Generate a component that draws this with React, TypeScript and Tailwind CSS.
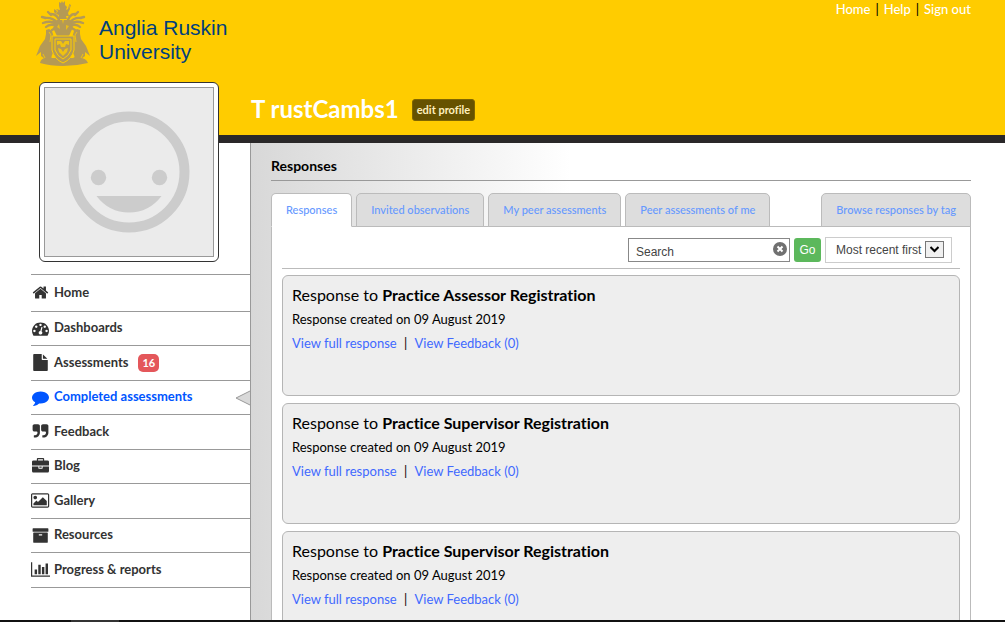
import { useState } from 'react';

interface NavItem {
  label: string;
  width: number;
  path: string;
  badge?: number;
  active?: boolean;
}

const navItems: NavItem[] = [
  {
    label: 'Home',
    width: 1792,
    path: 'M1472 992v480q0 26-19 45t-45 19h-384v-384h-256v384h-384q-26 0-45-19t-19-45v-480q0-1 .5-3t.5-3l575-474 575 474q1 2 1 6zm223-69l-62 74q-8 9-21 11h-3q-13 0-21-7l-692-577-692 577q-12 8-24 7-13-2-21-11l-62-74q-8-10-7-23.5t11-21.5l719-599q32-26 76-26t76 26l244 204v-195q0-14 9-23t23-9h192q14 0 23 9t9 23v408l219 182q10 8 11 21.5t-7 23.5z',
  },
  {
    label: 'Dashboards',
    width: 1792,
    path: 'M384 1152q0-53-37.5-90.5t-90.5-37.5-90.5 37.5-37.5 90.5 37.5 90.5 90.5 37.5 90.5-37.5 37.5-90.5zm192-448q0-53-37.5-90.5t-90.5-37.5-90.5 37.5-37.5 90.5 37.5 90.5 90.5 37.5 90.5-37.5 37.5-90.5zm428 481l101-382q6-26-7.5-48.5t-38.5-29.5-48 6.5-30 39.5l-101 382q-60 5-107 43.5t-63 98.5q-20 77 20 146t117 89 146-20 89-117q16-60-6-117t-72-91zm660-33q0-53-37.5-90.5t-90.5-37.5-90.5 37.5-37.5 90.5 37.5 90.5 90.5 37.5 90.5-37.5 37.5-90.5zm-640-640q0-53-37.5-90.5t-90.5-37.5-90.5 37.5-37.5 90.5 37.5 90.5 90.5 37.5 90.5-37.5 37.5-90.5zm448 192q0-53-37.5-90.5t-90.5-37.5-90.5 37.5-37.5 90.5 37.5 90.5 90.5 37.5 90.5-37.5 37.5-90.5zm320 448q0 261-141 483-19 29-54 29h-1402q-35 0-54-29-141-221-141-483 0-182 71-348t191-286 286-191 348-71 348 71 286 191 191 286 71 348z',
  },
  {
    label: 'Assessments',
    width: 1792,
    badge: 16,
    path: 'M1152 512v-472q22 14 36 28l408 408q14 14 28 36h-472zm-128 32q0 40 28 68t68 28h544v1056q0 40-28 68t-68 28h-1344q-40 0-68-28t-28-68v-1600q0-40 28-68t68-28h800v544z',
  },
  {
    label: 'Completed assessments',
    width: 1792,
    active: true,
    path: 'M1792 896q0 174-120 321.5t-326 233-450 85.5q-70 0-145-8-198 175-460 242-49 14-114 22-17 2-30.5-9t-17.5-29v-1q-3-4-.5-12t2-10 4.5-9.5l6-9 7-8.5 8-9q7-8 31-34.5t34.5-38 31-39.5 32.5-51 27-59 26-76q-157-89-247.5-220t-90.5-281q0-130 71-248.5t191-204.5 286-136.5 348-50.5q244 0 450 85.5t326 233 120 321.5z',
  },
  {
    label: 'Feedback',
    width: 1792,
    path: 'M832 320v704q0 104-40.5 198.5t-109.5 163.5-163.5 109.5-198.5 40.5h-64q-26 0-45-19t-19-45v-128q0-26 19-45t45-19h64q106 0 181-75t75-181v-32q0-40-28-68t-68-28h-224q-80 0-136-56t-56-136v-384q0-80 56-136t136-56h384q80 0 136 56t56 136zm896 0v704q0 104-40.5 198.5t-109.5 163.5-163.5 109.5-198.5 40.5h-64q-26 0-45-19t-19-45v-128q0-26 19-45t45-19h64q106 0 181-75t75-181v-32q0-40-28-68t-68-28h-224q-80 0-136-56t-56-136v-384q0-80 56-136t136-56h384q80 0 136 56t56 136z',
  },
  {
    label: 'Blog',
    width: 1792,
    path: 'M640 256h512v-128h-512v128zm1152 640v480q0 66-47 113t-113 47h-1472q-66 0-113-47t-47-113v-480h672v160q0 26 19 45t45 19h320q26 0 45-19t19-45v-160h672zm-768 0v128h-256v-128h256zm768-480v384h-1792v-384q0-66 47-113t113-47h352v-160q0-40 28-68t68-28h576q40 0 68 28t28 68v160h352q66 0 113 47t47 113z',
  },
  {
    label: 'Gallery',
    width: 1920,
    path: 'M640 576q0 80-56 136t-136 56-136-56-56-136 56-136 136-56 136 56 56 136zm1024 384v448h-1408v-192l320-320 160 160 512-512zm96-704h-1600q-13 0-22.5 9.5t-9.5 22.5v1216q0 13 9.5 22.5t22.5 9.5h1600q13 0 22.5-9.5t9.5-22.5v-1216q0-13-9.5-22.5t-22.5-9.5zm160 32v1216q0 66-47 113t-113 47h-1600q-66 0-113-47t-47-113v-1216q0-66 47-113t113-47h1600q66 0 113 47t47 113z',
  },
  {
    label: 'Resources',
    width: 1792,
    path: 'M1088 832q0-26-19-45t-45-19h-256q-26 0-45 19t-19 45 19 45 45 19h256q26 0 45-19t19-45zm576-192v960q0 26-19 45t-45 19h-1408q-26 0-45-19t-19-45v-960q0-26 19-45t45-19h1408q26 0 45 19t19 45zm64-448v256q0 26-19 45t-45 19h-1536q-26 0-45-19t-19-45v-256q0-26 19-45t45-19h1536q26 0 45 19t19 45z',
  },
  {
    label: 'Progress & reports',
    width: 2048,
    path: 'M640 896v512h-256v-512h256zm384-512v1024h-256v-1024h256zm1024 1152v128h-2048v-1536h128v1408h1920zm-640-896v768h-256v-768h256zm384-384v1152h-256v-1152h256z',
  },
];

const tabs = ['Responses', 'Invited observations', 'My peer assessments', 'Peer assessments of me'];

const responses = [
  { id: 1, title: 'Practice Assessor Registration', date: '09 August 2019' },
  { id: 2, title: 'Practice Supervisor Registration', date: '09 August 2019' },
  { id: 3, title: 'Practice Supervisor Registration', date: '09 August 2019' },
];

function Crest() {
  return (
    <svg viewBox="0 0 54 66" className="h-[66px] w-[54px] shrink-0" fill="#b59a55" aria-hidden="true">
      {/* lion on top */}
      <path d="M23 2l2 1 1-2 1 2 2-2v4l2 2-1 3 2-1 1-4 1 4-2 4 1 3h-3l1 3h-9l1-4-3-1 2-3-2-2 4 1-1-4z" />
      <path d="M18 9l3 2-1 3-2-2zM33 4l2 1-1 3z" />
      {/* plumes */}
      <g fill="none" stroke="#b59a55" strokeWidth="2.4" strokeLinecap="round">
        <path d="M24 23Q22 14 15 14M22 23Q16 17 9 18M21 24Q15 20 7 23M21 26Q14 23 10 27M21 27l-5 3M12 12l3 3M6 17l4 1" />
        <path d="M31 23Q33 14 39 14M33 23Q38 17 45 18M34 24Q39 20 47 23M34 26Q40 23 44 27M34 27l5 3M42 12l-3 3M48 17l-4 1" />
      </g>
      {/* helm */}
      <path d="M21 20h13l3 7-4 9H21l-4-8z" />
      <path d="M23 24l1 5-3-2zM30 25l3 1-3 4zM26 20l1 4 1-4z" fill="#ffcc00" opacity=".7" />
      {/* storks */}
      <path d="M16 31l-3-2-3 1v4l-1 5-5 7-4 10 5-4v4l4 3 3 3h2l2-7 3-6v-8z" />
      <path d="M38 31l3-2 3 1v4l1 5 5 7 4 10-5-4v4l-4 3-3 3h-2l-2-7-3-6v-8z" />
      <path d="M13 32l2 3-1 7M41 32l-2 3 1 7M7 54l2 4M47 54l-2 4" fill="none" stroke="#ffcc00" strokeWidth=".8" />
      {/* base */}
      <path d="M4 63q1-5 6-5l3-2 3 2h21l4-2 3 2q6 0 8 5-12 3-25 3T4 63z" />
      {/* shield */}
      <path d="M16 36h22v14q-2 9-11 13-9-4-11-13z" stroke="#ffcc00" />
      <path d="M19 39h16v11q-2 6-8 9-6-3-8-9z" fill="none" stroke="#ffcc00" />
      <path d="M21 41h4l2 3 2-3h4v4l-3-1-1 3h-4l-1-3-3 1zM22 48l3 1 2 3 2-3 3-1-1 4-4 4-4-4z" fill="#ffcc00" opacity=".8" />
    </svg>
  );
}

function Avatar() {
  return (
    <div className="ml-[39px] w-[180px] rounded-md border border-[#333] bg-white p-1">
      <svg viewBox="0 0 168 168" className="block w-full border border-[#999] bg-[#ebebeb]" fill="#ccc" role="img" aria-label="Profile picture">
        <circle cx="84" cy="84" r="55.5" fill="none" stroke="#ccc" strokeWidth="10" />
        <circle cx="53.5" cy="89.5" r="7.7" />
        <circle cx="114.5" cy="89.5" r="7.7" />
        <path d="M51.5 108h65Q104 124.5 84 124.5T51.5 108z" />
      </svg>
    </div>
  );
}

function Sidebar() {
  return (
    <aside className="relative -mt-[61px] w-[250px] shrink-0">
      <Avatar />
      <nav className="mt-3 ml-[31px] border-t border-[#999]">
        <ul>
          {navItems.map((item) => (
            <li key={item.label} className="relative h-[34px] border-b border-[#999] odd:h-[35px] first:odd:h-[37px]">
              <a
                href="#"
                className={`flex h-full items-center gap-1 pb-px text-[13px] font-bold ${item.active ? 'text-[#0055ff]' : 'text-[#333]'}`}
              >
                <span className="flex w-[19px] shrink-0 justify-center">
                  <svg viewBox={`0 0 ${item.width} 1792`} className="h-[17px] shrink-0" fill="currentColor" aria-hidden="true">
                    <path d={item.path} />
                  </svg>
                </span>
                <span>{item.label}</span>
                {item.badge && (
                  <span className="ml-[6px] rounded-[5px] bg-[#e4575b] px-1 text-[11px] leading-[18px] text-white">{item.badge}</span>
                )}
              </a>
              {item.active && (
                <svg viewBox="0 0 15 16" className="absolute top-[9px] right-0 h-4 w-[15px]" aria-hidden="true">
                  <path d="M15 1L1 8l14 7z" fill="#d9d9d9" />
                  <path d="M15 1L1 8l14 7" fill="none" stroke="#999" />
                </svg>
              )}
            </li>
          ))}
        </ul>
      </nav>
    </aside>
  );
}

function Toolbar() {
  const [query, setQuery] = useState('Search');

  return (
    <form className="flex items-center justify-end gap-1 border-b border-[#bbb] pr-2 pb-[5px] font-['Liberation_Sans',Arial,sans-serif] text-xs text-[#444]" onSubmit={(e) => e.preventDefault()}>
      <div className="relative">
        <input
          type="text"
          aria-label="Search"
          value={query}
          onChange={(e) => setQuery(e.target.value)}
          className="block h-6 w-[162px] border border-[#888] bg-white pt-[3px] pr-6 pl-[7px]"
        />
        <button type="button" aria-label="Clear search" onClick={() => setQuery('')} className="absolute top-1 right-[3px]">
          <svg viewBox="0 0 14 14" className="h-[14px] w-[14px]">
            <circle cx="7" cy="7" r="7" fill="#707070" />
            <path d="M4.5 4.5l5 5M9.5 4.5l-5 5" stroke="#fff" strokeWidth="2" />
          </svg>
        </button>
      </div>
      <button type="submit" className="h-6 w-[27px] rounded-[3px] bg-[#5cb85c] text-white">Go</button>
      <div className="relative">
        <select aria-label="Sort order" className="block h-[26px] w-[127px] appearance-none border border-[#ccc] bg-white pl-[10px]">
          <option>Most recent first</option>
          <option>Oldest first</option>
        </select>
        <span className="pointer-events-none absolute top-1 right-2 flex h-[17px] w-[19px] items-center justify-center border border-[#777] bg-[#f0f0f0]">
          <svg viewBox="0 0 9 7" className="h-[7px] w-[9px]" fill="none" stroke="#000" strokeWidth="2">
            <path d="M.5 1l4 4 4-4" />
          </svg>
        </span>
      </div>
    </form>
  );
}

function ResponseCard({ title, date }: { title: string; date: string }) {
  return (
    <article className="h-[121px] shrink-0 rounded-md border border-[#b5b5b5] bg-[#eee] px-[9px] pt-[7px] text-[13px] leading-6 text-black">
      <h2 className="text-base leading-6">
        Response to <span className="font-bold">{title}</span>
      </h2>
      <p>Response created on {date}</p>
      <p>
        <a href="#" className="text-[#4169ff]">View full response</a>
        <span className="mx-1"> | </span>
        <a href="#" className="text-[#4169ff]">View Feedback (0)</a>
      </p>
    </article>
  );
}

function Tab({ label, active = false }: { label: string; active?: boolean }) {
  return (
    <button
      type="button"
      role="tab"
      aria-selected={active}
      className={`-mb-px h-[34px] rounded-t-[5px] border px-[14px] text-[11px] font-medium whitespace-nowrap text-[#6699ff] last:ml-auto ${
        active ? 'border-[#bbb] border-b-white bg-white' : 'border-[#bbb] bg-[#ddd]'
      }`}
    >
      {label}
    </button>
  );
}

export default function App() {
  return (
    <div className="flex h-screen flex-col overflow-hidden bg-white font-[Lato,sans-serif] [font-variant-ligatures:none]">
      <header className="shrink-0 border-b-8 border-[#2a2829] bg-[#ffcc00]">
        <div className="flex h-[98px] items-start justify-between pr-[34px] pl-9">
          <a href="#" className="flex items-start gap-[9px]">
            <Crest />
            <span className="mt-4 font-['Liberation_Sans',Arial,sans-serif] text-[21px] leading-6 font-medium text-[#003f7d]">
              Anglia Ruskin
              <br />
              University
            </span>
          </a>
          <nav className="flex gap-[5px] text-[13px] leading-[18px] font-medium text-black">
            <a href="#" className="text-white">Home</a>
            <span>|</span>
            <a href="#" className="text-white">Help</a>
            <span>|</span>
            <a href="#" className="text-white">Sign out</a>
          </nav>
        </div>
        <div className="flex h-[37px] items-start gap-[13px] pl-[251px]">
          <h1 className="text-2xl leading-[22px] font-bold text-white">T rustCambs1</h1>
          <button type="button" className="mt-px h-[22px] rounded-[3px] border border-[#806600] bg-[#665200] px-1 text-[11px] font-bold text-[#fff0bf]">
            edit profile
          </button>
        </div>
      </header>

      <div className="flex min-h-0 flex-1">
        <Sidebar />
        <main className="min-w-0 flex-1 border-l border-[#999] bg-linear-to-r from-[#d8d8d8] to-white to-[320px] pr-[34px] pl-5">
          <h2 className="border-b border-[#999] pt-[13px] pb-1 text-sm leading-5 font-bold text-black">Responses</h2>
          <div role="tablist" className="mt-3 flex gap-1 border-b border-[#bbb]">
            {tabs.map((label, i) => (
              <Tab key={label} label={label} active={i === 0} />
            ))}
            <Tab label="Browse responses by tag" />
          </div>
          <section className="flex flex-col border-x border-[#bbb] bg-white px-[10px] pt-[10px]">
            <Toolbar />
            <div className="mt-[6px] flex flex-col gap-[7px]">
              {responses.map((r) => (
                <ResponseCard key={r.id} title={r.title} date={r.date} />
              ))}
            </div>
          </section>
        </main>
      </div>

      <footer className="relative flex h-[2px] shrink-0 bg-[#111]">
        <div className="ml-[71px] w-12 bg-[#333]" />
      </footer>
    </div>
  );
}
